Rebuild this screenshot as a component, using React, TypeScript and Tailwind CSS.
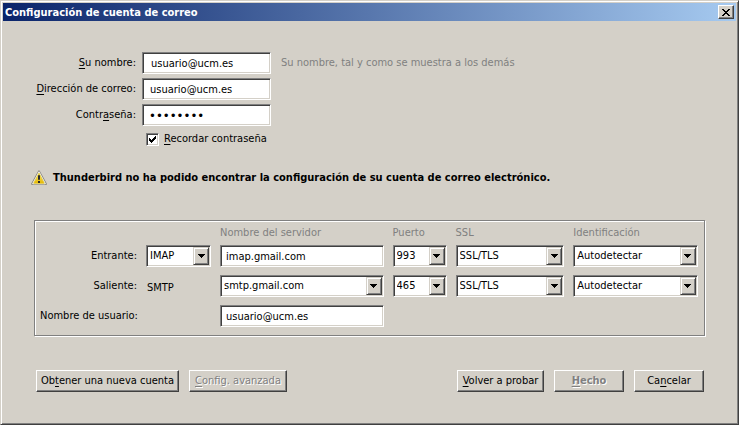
import React from "react";

const sunken =
  "border border-t-[#808080] border-l-[#808080] border-b-white border-r-white bg-white shadow-[inset_1px_1px_0_#404040,inset_-1px_-1px_0_#d4d0c8]";
const raised =
  "border border-t-white border-l-white border-b-[#404040] border-r-[#404040] bg-[#d4d0c8] shadow-[inset_-1px_-1px_0_#808080]";

function Key({ text, at }: { text: string; at: number }) {
  return (
    <>
      {text.slice(0, at)}
      <span className="underline decoration-1 underline-offset-2">{text[at]}</span>
      {text.slice(at + 1)}
    </>
  );
}

function Select({ label, value, options }: { label: string; value: string; options: string[] }) {
  return (
    <div className="relative w-full">
      <select
        aria-label={label}
        defaultValue={value}
        className={`block h-[22px] w-full appearance-none pr-5 pl-[3px] outline-none ${sunken}`}
      >
        {options.map((o) => (
          <option key={o}>{o}</option>
        ))}
      </select>
      <span className="pointer-events-none absolute inset-y-0.5 right-0.5 flex w-4 items-center justify-center border border-t-[#d4d0c8] border-r-[#404040] border-b-[#404040] border-l-[#d4d0c8] bg-[#d4d0c8] shadow-[inset_1px_1px_0_#fff,inset_-1px_-1px_0_#808080]">
        <svg width="7" height="4" viewBox="0 0 7 4" shapeRendering="crispEdges" aria-hidden="true">
          <path d="M0 0h7v1H0zM1 1h5v1H1zM2 2h3v1H2zM3 3h1v1H3z" />
        </svg>
      </span>
    </div>
  );
}

function Field({ id, type = "text", value, className }: { id: string; type?: string; value: string; className: string }) {
  return <input id={id} type={type} defaultValue={value} className={`block h-[22px] outline-none ${sunken} ${className}`} />;
}

function Button({ text, at, className, disabled }: { text: string; at: number; className: string; disabled?: boolean }) {
  return (
    <button
      type="button"
      disabled={disabled}
      className={`h-[22px] whitespace-nowrap ${raised} ${className} disabled:text-[#808080] disabled:[text-shadow:1px_1px_0_#fff]`}
    >
      <Key text={text} at={at} />
    </button>
  );
}

const security = ["SSL/TLS", "STARTTLS", "Ninguna"];
const auth = ["Autodetectar", "Contraseña normal", "Contraseña cifrada"];

export default function App() {
  return (
    <div className="min-h-screen border border-t-[#d4d0c8] border-r-[#404040] border-b-[#404040] border-l-[#d4d0c8] bg-[#d4d0c8] p-0.5 font-['DejaVu_Sans_Condensed','DejaVu_Sans',sans-serif] text-[11px] leading-4 text-black shadow-[inset_1px_1px_0_#fff,inset_-1px_-1px_0_#808080]">
      <header className="flex h-[18px] items-center justify-between bg-linear-to-r/srgb from-[#0a246a] to-[#a6caf0] px-0.5">
        <h1 className="pt-px font-bold text-white">Configuración de cuenta de correo</h1>
        <button type="button" aria-label="Cerrar" className={`flex h-3.5 w-4 items-center justify-center ${raised}`}>
          <svg width="8" height="7" viewBox="0 0 8 7" shapeRendering="crispEdges" aria-hidden="true">
            <path d="M0 0h2v1H0zM6 0h2v1H6zM1 1h2v1H1zM5 1h2v1H5zM2 2h4v1H2zM3 3h2v1H3zM2 4h4v1H2zM1 5h2v1H1zM5 5h2v1H5zM0 6h2v1H0zM6 6h2v1H6z" />
          </svg>
        </button>
      </header>

      <form className="px-[31px] pt-[31px] pb-7">
        <div className="grid grid-cols-[103px_134px_1fr] items-center gap-y-1">
          <label htmlFor="name" className="pr-px text-right"><Key text="Su nombre:" at={0} /></label>
          <Field id="name" value="usuario@ucm.es" className="ml-[5px] w-[129px] pl-2" />
          <p className="pl-2.5 text-[#808080]">Su nombre, tal y como se muestra a los demás</p>
          <label htmlFor="mail" className="pr-px text-right"><Key text="Dirección de correo:" at={0} /></label>
          <Field id="mail" value="usuario@ucm.es" className="col-span-2 ml-[5px] w-[129px] pl-[7px]" />
          <label htmlFor="pass" className="pr-px text-right"><Key text="Contraseña:" at={5} /></label>
          <Field id="pass" type="password" value="password" className="col-span-2 ml-[5px] w-[129px] pl-1.5 text-[13px]" />
        </div>
        <div className="mt-[5px] ml-[112px] flex items-center gap-[5px]">
          <span className="relative flex">
            <input id="remember" type="checkbox" defaultChecked className={`peer size-[13px] appearance-none ${sunken}`} />
            <svg className="pointer-events-none absolute top-[3px] left-[3px] hidden peer-checked:block" width="7" height="7" viewBox="0 0 7 7" shapeRendering="crispEdges" aria-hidden="true">
              <path d="M0 2h1v3H0zM1 3h1v3H1zM2 4h1v3H2zM3 3h1v3H3zM4 2h1v3H4zM5 1h1v3H5zM6 0h1v3H6z" />
            </svg>
          </span>
          <label htmlFor="remember"><Key text="Recordar contraseña" at={0} /></label>
        </div>

        <div className="mt-[23px] -ml-[3px] flex items-center gap-1.5">
          <svg width="16" height="16" viewBox="0 0 16 16" aria-hidden="true">
            <defs>
              <linearGradient id="warn" x1="0" y1="0" x2="0" y2="1">
                <stop offset="0" stopColor="#fff27a" />
                <stop offset="1" stopColor="#e3b400" />
              </linearGradient>
            </defs>
            <path d="M8 1.4 14.9 14H1.1z" fill="#8a8880" stroke="#8a8880" strokeWidth="2" strokeLinejoin="round" />
            <path d="M8 1.8 14.4 13.8H1.6z" fill="#eeeee8" stroke="#eeeee8" strokeWidth="1" strokeLinejoin="round" />
            <path d="M8 3.2 13.2 13.2H2.8z" fill="url(#warn)" stroke="#e6c520" strokeWidth=".8" strokeLinejoin="round" />
            <path d="M7 5.2h2v4.6H7zM7 11h2v2H7z" fill="#2a2a2a" />
          </svg>
          <p className="font-bold">Thunderbird no ha podido encontrar la configuración de su cuenta de correo electrónico.</p>
        </div>

        <section className="mt-[34px] border border-[#808080] pt-1 pr-1.5 pb-2 pl-[5px] shadow-[1px_1px_0_#fff,inset_1px_1px_0_#fff]">
          <div className="grid grid-cols-[97px_65px_minmax(0,164fr)_54px_minmax(0,109fr)_minmax(0,125fr)] items-center gap-x-[9px] gap-y-2">
            <span className="col-start-3 -mb-1 text-[#808080]">Nombre del servidor</span>
            <span className="-mb-1 text-[#808080]">Puerto</span>
            <span className="-mb-1 text-[#808080]">SSL</span>
            <span className="-mb-1 text-[#808080]">Identificación</span>

            <label htmlFor="incoming" className="text-right">Entrante:</label>
            <Select label="Protocolo" value="IMAP" options={["IMAP", "POP3"]} />
            <Field id="incoming" value="imap.gmail.com" className="w-full pl-[5px]" />
            <Select label="Puerto entrante" value="993" options={["993", "143"]} />
            <Select label="SSL entrante" value="SSL/TLS" options={security} />
            <Select label="Identificación entrante" value="Autodetectar" options={auth} />

            <span className="text-right">Saliente:</span>
            <span className="pt-1 pl-px">SMTP</span>
            <Select label="Servidor saliente" value="smtp.gmail.com" options={["smtp.gmail.com"]} />
            <Select label="Puerto saliente" value="465" options={["465", "587", "25"]} />
            <Select label="SSL saliente" value="SSL/TLS" options={security} />
            <Select label="Identificación saliente" value="Autodetectar" options={auth} />

            <label htmlFor="user" className="text-right whitespace-nowrap">Nombre de usuario:</label>
            <Field id="user" value="usuario@ucm.es" className="col-start-3 w-full pl-[5px]" />
          </div>
        </section>

        <footer className="mt-[34px] flex justify-between pr-px pl-0.5">
          <div className="flex gap-2.5">
            <Button text="Obtener una nueva cuenta" at={2} className="w-[143px]" />
            <Button text="Config. avanzada" at={0} className="w-[98px]" disabled />
          </div>
          <div className="flex gap-2.5">
            <Button text="Volver a probar" at={0} className="w-[87px]" />
            <Button text="Hecho" at={0} className="w-[70px] font-bold" disabled />
            <Button text="Cancelar" at={2} className="w-[70px]" />
          </div>
        </footer>
      </form>
    </div>
  );
}
